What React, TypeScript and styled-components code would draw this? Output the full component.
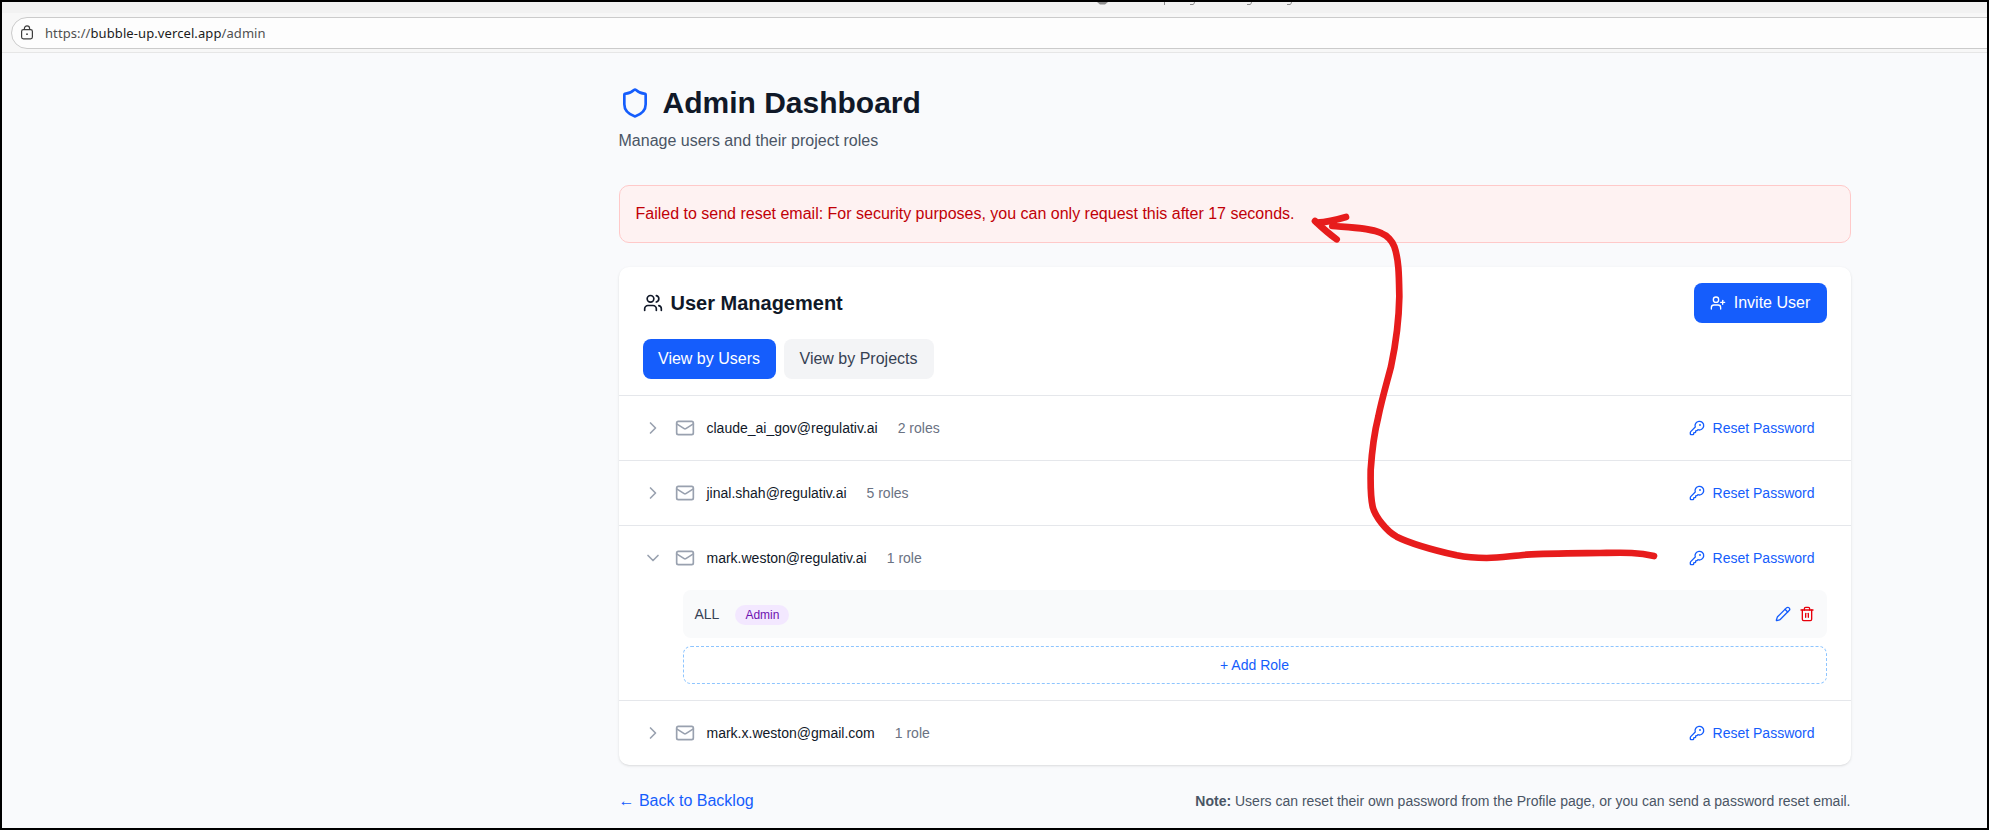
import React from 'react';
import styled, { createGlobalStyle, css } from 'styled-components';
import {
  ChevronDown,
  ChevronRight,
  KeyRound,
  Mail,
  Pencil,
  Shield,
  Trash2,
  UserPlus,
  Users,
} from 'lucide-react';

const GlobalStyle = createGlobalStyle`
  *, *::before, *::after { box-sizing: border-box; }
  body {
    margin: 0;
    font-family: "Liberation Sans", Arial, sans-serif;
    font-size: 16px;
    line-height: 24px;
    color: #101828;
  }
  h1, h2, p { margin: 0; }
  button { font: inherit; border: 0; background: none; padding: 0; cursor: pointer; }
  svg { flex-shrink: 0; display: block; }
`;

const Window = styled.div`
  position: relative;
  width: 1989px;
  height: 830px;
  border: 2px solid #000;
  overflow: hidden;
  background: #f9fafc;
`;

const TabStrip = styled.div`
  height: 11px;
  background: #f2f2f2;
  padding-left: 1094px;
`;

const Toolbar = styled.div`
  height: 40px;
  padding: 4px 0 0 9px;
  background: #f7f7f7;
  border-bottom: 1px solid #e6e6e6;
  overflow: hidden;
`;

const AddressBar = styled.div`
  display: flex;
  align-items: center;
  width: 2020px;
  height: 32px;
  padding-left: 8px;
  gap: 11px;
  border: 1px solid #cbcbcb;
  border-radius: 16px;
  background: #fdfdfd;
`;

const Url = styled.span`
  font-family: "Noto Sans", "Open Sans", sans-serif;
  font-size: 13px;
  line-height: 20px;
  letter-spacing: 0.09px;
  color: #505050;
  white-space: nowrap;
  strong { font-weight: 400; color: #1b1b1b; }
`;

const Page = styled.main`
  width: 1232px;
  margin-left: 616.5px;
  padding-top: 32px;
`;

const TitleRow = styled.div`
  display: flex;
  align-items: center;
  gap: 12px;
  svg { color: #155dfc; }
`;

const Title = styled.h1`
  font-size: 30px;
  line-height: 36px;
  font-weight: 700;
`;

const Subtitle = styled.p`
  margin-top: 8px;
  color: #4a5565;
`;

const Alert = styled.div`
  margin-top: 32px;
  padding: 16px;
  border: 1px solid #ffc9c9;
  border-radius: 10px;
  background: #fef2f2;
  color: #c10007;
`;

const Card = styled.section`
  margin-top: 24px;
  border-radius: 10px;
  background: #fff;
  box-shadow: 0 1px 3px rgba(0, 0, 0, 0.1), 0 1px 2px -1px rgba(0, 0, 0, 0.1);
`;

const CardHeader = styled.div`
  padding: 16px 24px;
  border-bottom: 1px solid #e5e7eb;
`;

const HeaderRow = styled.div`
  display: flex;
  align-items: center;
  justify-content: space-between;
`;

const CardTitle = styled.h2`
  display: flex;
  align-items: center;
  gap: 8px;
  font-size: 20px;
  line-height: 28px;
  font-weight: 700;
`;

const Tabs = styled.div`
  display: flex;
  gap: 8px;
  margin-top: 16px;
`;

const Button = styled.button<{ $primary?: boolean; $width: number }>`
  display: flex;
  align-items: center;
  justify-content: center;
  gap: 8px;
  width: ${({ $width }) => $width}px;
  height: 40px;
  border-radius: 8px;
  white-space: nowrap;
  ${({ $primary }) =>
    $primary
      ? css`background: #155dfc; color: #fff;`
      : css`background: #f3f4f6; color: #364153;`}
`;

const UserItem = styled.div`
  & + & { border-top: 1px solid #e5e7eb; }
`;

const UserRow = styled.div`
  display: flex;
  align-items: center;
  justify-content: space-between;
  height: 64px;
  padding: 0 24px;
  font-size: 14px;
  line-height: 20px;
`;

const Identity = styled.div`
  display: flex;
  align-items: center;
  gap: 12px;
  svg { color: #99a1af; }
`;

const RoleCount = styled.span`
  margin-left: 8px;
  color: #6a7282;
`;

const ResetButton = styled.button`
  display: flex;
  align-items: center;
  gap: 8px;
  padding: 0 12px;
  color: #155dfc;
`;

const Roles = styled.div`
  display: flex;
  flex-direction: column;
  gap: 8px;
  padding: 0 24px 16px 64px;
  font-size: 14px;
  line-height: 20px;
`;

const RoleRow = styled.div`
  display: flex;
  align-items: center;
  justify-content: space-between;
  height: 48px;
  padding: 0 12px;
  border-radius: 8px;
  background: #f9fafb;
`;

const RoleName = styled.div`
  display: flex;
  align-items: center;
  gap: 16px;
  color: #364153;
`;

const Badge = styled.span`
  margin-top: 2px;
  padding: 2px 10px;
  border-radius: 10px;
  background: #f3e8ff;
  color: #6e11b0;
  font-size: 12px;
  line-height: 16px;
`;

const RoleActions = styled.div`
  display: flex;
  gap: 8px;
`;

const IconButton = styled.button<{ $danger?: boolean }>`
  color: ${({ $danger }) => ($danger ? '#e7000b' : '#155dfc')};
`;

const AddRole = styled.button`
  height: 38px;
  border: 1px dashed #8ec5ff;
  border-radius: 8px;
  color: #155dfc;
`;

const Footer = styled.footer`
  display: flex;
  align-items: center;
  justify-content: space-between;
  margin-top: 24px;
`;

const BackLink = styled.a`
  height: 24px;
  color: #155dfc;
`;

const BackArrow = styled.span`
  font-family: "Liberation Serif", serif;
`;

const Note = styled.p`
  font-size: 14px;
  line-height: 20px;
  color: #4a5565;
`;

const Annotation = styled.svg`
  position: absolute;
  left: 1198px;
  top: 168px;
  pointer-events: none;
`;

const users = [
  { email: 'claude_ai_gov@regulativ.ai', roles: '2 roles' },
  { email: 'jinal.shah@regulativ.ai', roles: '5 roles' },
  { email: 'mark.weston@regulativ.ai', roles: '1 role', open: true },
  { email: 'mark.x.weston@gmail.com', roles: '1 role' },
];

function LockIcon() {
  return (
    <svg width="14" height="16" viewBox="0 0 14 16" fill="none" stroke="#3c3c3c" strokeWidth="1.2">
      <rect x="1.6" y="4.6" width="10.8" height="9.3" rx="1.8" />
      <path d="M4.4 4.6V3.4a2.6 2.6 0 0 1 5.2 0v1.2" />
      <circle cx="7" cy="9.2" r="0.9" fill="#3c3c3c" stroke="none" />
    </svg>
  );
}

export default function App() {
  return (
    <Window>
      <GlobalStyle />
      <TabStrip>
        <svg width="200" height="4" viewBox="0 0 200 4" fill="none" stroke="#8c8c8c">
          <path d="M1 0H12L9 2.5H4Z" fill="#8c8c8c" stroke="none" />
          <path d="M68.5 0V3M94 2.5H97Q98.5 2 98.5 0M151 2.5H154Q155.500 2 155.500 0M191 2.500H194Q195.500 2 195.500 0" />
        </svg>
      </TabStrip>
      <Toolbar>
        <AddressBar>
          <LockIcon />
          <Url>
            https://<strong>bubble-up.vercel.app</strong>/admin
          </Url>
        </AddressBar>
      </Toolbar>

      <Page>
        <TitleRow>
          <Shield size={32} />
          <Title>Admin Dashboard</Title>
        </TitleRow>
        <Subtitle>Manage users and their project roles</Subtitle>

        <Alert>
          Failed to send reset email: For security purposes, you can only request this after 17 seconds.
        </Alert>

        <Card>
          <CardHeader>
            <HeaderRow>
              <CardTitle>
                <Users size={20} />
                User Management
              </CardTitle>
              <Button $primary $width={133}>
                <UserPlus size={16} />
                Invite User
              </Button>
            </HeaderRow>
            <Tabs>
              <Button $primary $width={133}>View by Users</Button>
              <Button $width={150}>View by Projects</Button>
            </Tabs>
          </CardHeader>

          {users.map((user) => (
            <UserItem key={user.email}>
              <UserRow>
                <Identity>
                  {user.open ? <ChevronDown size={20} /> : <ChevronRight size={20} />}
                  <Mail size={20} />
                  <span>{user.email}</span>
                  <RoleCount>{user.roles}</RoleCount>
                </Identity>
                <ResetButton>
                  <KeyRound size={16} />
                  Reset Password
                </ResetButton>
              </UserRow>
              {user.open && (
                <Roles>
                  <RoleRow>
                    <RoleName>
                      ALL
                      <Badge>Admin</Badge>
                    </RoleName>
                    <RoleActions>
                      <IconButton aria-label="Edit role">
                        <Pencil size={16} />
                      </IconButton>
                      <IconButton $danger aria-label="Delete role">
                        <Trash2 size={16} />
                      </IconButton>
                    </RoleActions>
                  </RoleRow>
                  <AddRole>+ Add Role</AddRole>
                </Roles>
              )}
            </UserItem>
          ))}
        </Card>

        <Footer>
          <BackLink>
            <BackArrow>←</BackArrow> Back to Backlog
          </BackLink>
          <Note>
            <strong>Note:</strong> Users can reset their own password from the Profile page, or you can send a
            password reset email.
          </Note>
        </Footer>
      </Page>

      <Annotation
        width="500"
        height="400"
        viewBox="0 0 1500 1200"
        fill="none"
        stroke="#e71c1c"
        strokeWidth="20"
        strokeLinecap="round"
        strokeLinejoin="round"
      >
        <path d="M1362 1158C1310 1146 1270 1148 1200 1149C1100 1150 1040 1150 980 1154C930 1158 900 1164 860 1164C820 1164 800 1162 770 1156C700 1140 640 1125 590 1100C560 1084 525 1040 518 1010C510 975 512 930 512 900C516 840 520 800 535 740C545 690 560 640 573 590C590 510 597 440 598 380C597 320 597 270 583 230C577 214 562 196 545 190C510 173 450 172 397 168" />
        <path d="M438 141C415 148 385 156 350 158M345 153C365 172 385 190 410 208" />
      </Annotation>
    </Window>
  );
}
